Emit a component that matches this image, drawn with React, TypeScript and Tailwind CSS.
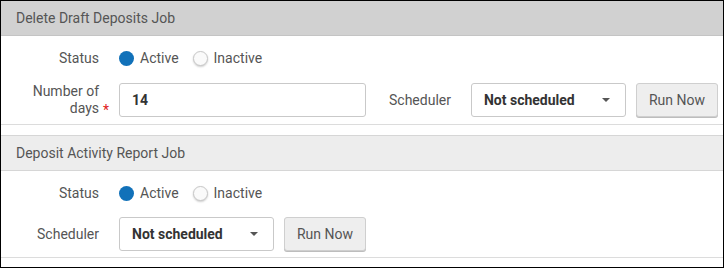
import React from "react";

const font = { fontFamily: "Roboto, 'Liberation Sans', Arial, sans-serif" };

function Radio({ checked, label }: { checked: boolean; label: string }) {
  return (
    <div className="flex items-center">
      {checked ? (
        <span className="w-[15px] h-[15px] rounded-full bg-[#1171b9] inline-block" />
      ) : (
        <span className="w-[15px] h-[15px] rounded-full bg-[#fafafa] border border-[#c8c8c8] shadow-[0_1px_2px_rgba(0,0,0,0.2)] inline-block" />
      )}
      <span className="ml-[6px] text-[14px] text-[#555]">{label}</span>
    </div>
  );
}

function Select() {
  return (
    <div className="w-[155px] h-[34px] border border-[#c9c9c9] rounded-[3px] bg-white flex items-center justify-between pl-[12px] pr-[15px]">
      <span className="text-[14px] font-bold text-[#333]">Not scheduled</span>
      <svg width="8" height="4" viewBox="0 0 8 4">
        <path d="M0 0 L8 0 L4 4 Z" fill="#555" />
      </svg>
    </div>
  );
}

function RunNow() {
  return (
    <button className="w-[82px] h-[34px] bg-[#eeeeee] border border-[#cfcfcf] rounded-[3px] shadow-[0_1px_0_#bdbdbd] text-[14px] text-[#555]">
      Run Now
    </button>
  );
}

function Label({ children, required }: { children: React.ReactNode; required?: boolean }) {
  return (
    <div className="w-[98px] text-right text-[14px] text-[#555] leading-[17px] relative shrink-0">
      {children}
      {required && (
        <span className="absolute left-[102px] bottom-[-2px] text-[#e02020] text-[14px]">*</span>
      )}
    </div>
  );
}

export default function App() {
  return (
    <div style={font} className="w-[724px] h-[268px] border border-black bg-white overflow-hidden">
      {/* Section 1 */}
      <div className="h-[35px] bg-[#d1d1d1] border-b border-[#c4c4c4] flex items-center pl-[15px] text-[14px] text-[#555]">
        Delete Draft Deposits Job
      </div>
      <div className="pt-[11px] pb-[7px] border-b border-[#dcdcdc]">
        <div className="h-[22px] flex items-center">
          <Label>Status</Label>
          <div className="ml-[20px] flex items-center gap-[14px]">
            <Radio checked label="Active" />
            <Radio checked={false} label="Inactive" />
          </div>
        </div>
        <div className="mt-[14px] h-[34px] flex items-center">
          <Label required>
            Number of
            <br />
            days
          </Label>
          <div className="ml-[20px] w-[247px] h-[34px] border border-[#c9c9c9] rounded-[3px] flex items-center pl-[12px] text-[14px] font-bold text-[#333]">
            14
          </div>
          <div className="ml-[23px] text-[14px] text-[#555]">Scheduler</div>
          <div className="ml-[20px]">
            <Select />
          </div>
          <div className="ml-[10px]">
            <RunNow />
          </div>
        </div>
      </div>
      {/* Section 2 */}
      <div className="mt-[10px] h-[36px] bg-[#ededed] border-y border-[#d6d6d6] flex items-center pl-[15px] text-[14px] text-[#555]">
        Deposit Activity Report Job
      </div>
      <div className="pt-[11px] pb-[6px] border-b border-[#dcdcdc]">
        <div className="h-[22px] flex items-center">
          <Label>Status</Label>
          <div className="ml-[20px] flex items-center gap-[14px]">
            <Radio checked label="Active" />
            <Radio checked={false} label="Inactive" />
          </div>
        </div>
        <div className="mt-[13px] h-[34px] flex items-center">
          <Label>Scheduler</Label>
          <div className="ml-[20px]">
            <Select />
          </div>
          <div className="ml-[10px]">
            <RunNow />
          </div>
        </div>
      </div>
    </div>
  );
}
